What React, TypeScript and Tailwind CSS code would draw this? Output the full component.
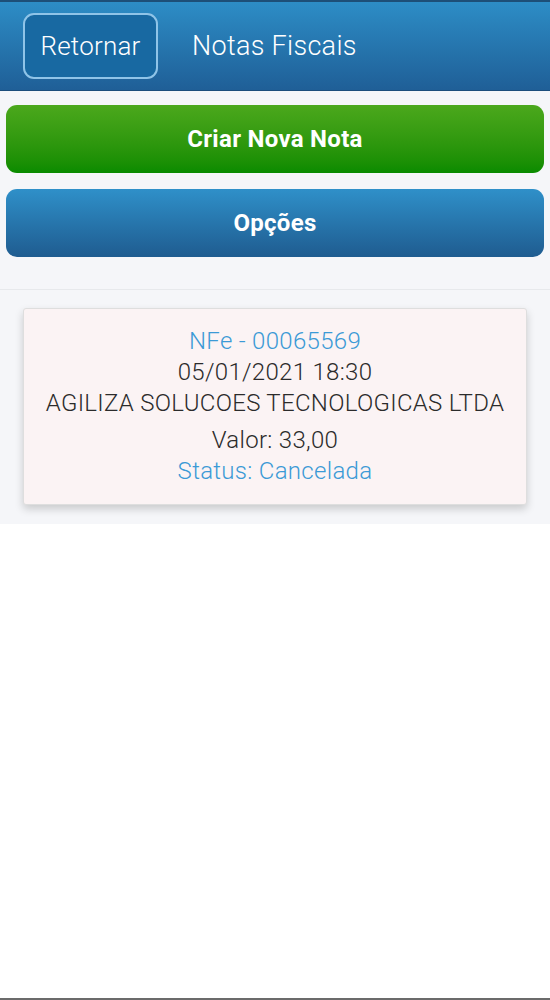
// Notas Fiscais list screen
export default function App() {
  return (
    <div className="flex h-[1000px] w-[550px] flex-col overflow-hidden bg-white font-['Roboto',sans-serif]">
      {/* Header bar */}
      <header className="flex h-[91px] items-center gap-[34px] border-t-2 border-b border-t-[#1d4f78] border-b-[#1c4e7c] bg-gradient-to-b from-[#2d8dc6] to-[#1f5f97] px-[23px]">
        <button className="flex h-[66px] w-[135px] items-center justify-center rounded-[11px] border-2 border-[#8fc4e8] bg-[#1869a2] text-[26px] font-light tracking-[0.2px] text-white">
          Retornar
        </button>
        <h1 className="text-[27px] font-light tracking-[0.3px] text-white">Notas Fiscais</h1>
      </header>

      {/* Actions + list */}
      <div className="flex flex-col bg-[#f5f6f9] pb-[19px]">
        <div className="flex flex-col gap-[16px] px-[6px] pt-[14px] pb-[32px]">
          <button className="h-[68px] rounded-[11px] bg-gradient-to-b from-[#4ba81c] to-[#088b00] text-[24px] font-bold tracking-[0.3px] text-white">
            Criar Nova Nota
          </button>
          <button className="h-[68px] rounded-[11px] bg-gradient-to-b from-[#2f90c9] to-[#1f5c90] text-[24px] font-bold tracking-[0.3px] text-white">
            Opções
          </button>
        </div>
        <div className="h-px bg-[#e7e9ec]" />
        <div className="px-[23px] pt-[18px]">
          <div className="flex flex-col items-center rounded-[3px] border border-[#dedede] bg-[#fbf3f4] pt-[17px] pb-[17px] text-[24px] leading-[31px] font-light tracking-[0.3px] text-[#2b2b2b] shadow-[0_4px_8px_rgba(0,0,0,0.18)]">
            <span className="text-[#3b9ad6]">NFe - 00065569</span>
            <span>05/01/2021 18:30</span>
            <span>AGILIZA SOLUCOES TECNOLOGICAS LTDA</span>
            <span className="mt-[6px]">Valor: 33,00</span>
            <span className="text-[#3b9ad6]">Status: Cancelada</span>
          </div>
        </div>
      </div>

      <div className="flex-1 border-b-2 border-b-[#6b6b6b]" />
    </div>
  );
}
